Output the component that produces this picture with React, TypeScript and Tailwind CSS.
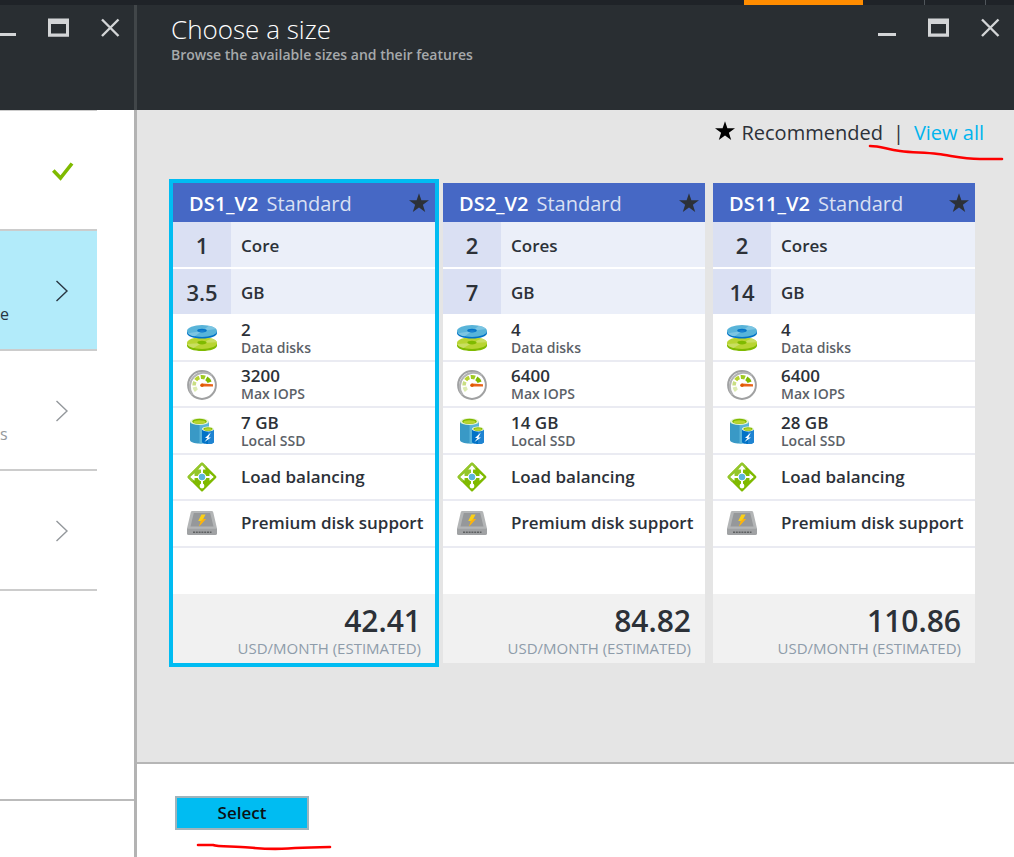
import { useState } from "react";
import type { ReactNode } from "react";

type Size = {
  name: string;
  cores: string;
  coreLabel: string;
  memory: string;
  disks: string;
  iops: string;
  ssd: string;
  price: string;
};

const sizes: Size[] = [
  { name: "DS1_V2", cores: "1", coreLabel: "Core", memory: "3.5", disks: "2", iops: "3200", ssd: "7 GB", price: "42.41" },
  { name: "DS2_V2", cores: "2", coreLabel: "Cores", memory: "7", disks: "4", iops: "6400", ssd: "14 GB", price: "84.82" },
  { name: "DS11_V2", cores: "2", coreLabel: "Cores", memory: "14", disks: "4", iops: "6400", ssd: "28 GB", price: "110.86" },
];

function Star() {
  return (
    <svg width="20" height="20" viewBox="0 0 20 20" fill="currentColor" aria-hidden="true">
      <path d="M10 0.2 12.4 7.3H20L13.9 11.8 16.2 19 10 14.6 3.8 19 6.1 11.8 0 7.3H7.6Z" />
    </svg>
  );
}

function WindowButtons() {
  return (
    <div className="flex gap-8 text-[#d3d5d7]">
      <button type="button" aria-label="Minimize" className="flex size-5 items-center justify-center">
        <svg width="22" height="20" viewBox="0 0 22 20" className="shrink-0">
          <path d="M3 16.5H21" stroke="currentColor" strokeWidth="3" />
        </svg>
      </button>
      <button type="button" aria-label="Maximize" className="flex size-5 items-center justify-center">
        <svg width="24" height="20" viewBox="0 0 24 20" className="shrink-0" fill="currentColor">
          <path fillRule="evenodd" d="M2 0.5H23V18.8H2ZM5 6V15.5H20V6Z" />
        </svg>
      </button>
      <button type="button" aria-label="Close" className="flex size-5 items-center justify-center">
        <svg width="20" height="20" viewBox="0 0 20 20" className="shrink-0">
          <path d="M2 1.5 18.5 18M18.5 1.5 2 18" stroke="currentColor" strokeWidth="2.4" />
        </svg>
      </button>
    </div>
  );
}

function Chevron() {
  return (
    <svg width="14" height="22" viewBox="0 0 14 22" fill="none" stroke="currentColor" strokeWidth="1.4" className="ml-[3px]" aria-hidden="true">
      <path d="M1.5 1 12 11 1.5 21" />
    </svg>
  );
}

function DisksIcon() {
  return (
    <svg width="30" height="28" viewBox="0 0 30 28" aria-hidden="true">
      <path d="M0 19.5V21.5C0 24.8 6.7 27 15 27S30 24.8 30 21.5V19.5Z" fill="#7fba00" />
      <ellipse cx="15" cy="19" rx="15" ry="6" fill="#b8d432" />
      <path d="M15 19 24.5 14.4C27.5 15.2 29.6 16.6 30 18.2Z" fill="#c9de62" />
      <path d="M15 19 0.2 20C0.7 21.8 3.4 23.4 6.5 24Z" fill="#c9de62" />
      <ellipse cx="15" cy="18.6" rx="4.6" ry="1.8" fill="#7fba00" />
      <path d="M0 7V9C0 12.3 6.7 14.5 15 14.5S30 12.3 30 9V7Z" fill="#0072c6" />
      <ellipse cx="15" cy="7" rx="15" ry="6" fill="#59b4d9" />
      <path d="M15 7 22 1.8C25 2.5 28 3.6 29.2 5Z" fill="#7cc5e2" />
      <path d="M15 7 1 9.2C2.2 10.9 4.5 12 7.8 12.3Z" fill="#7cc5e2" />
      <ellipse cx="15" cy="6.6" rx="4.8" ry="1.8" fill="#0072c6" />
      <ellipse cx="15" cy="7.1" rx="3.4" ry="0.8" fill="#1f84d2" />
    </svg>
  );
}

function GaugeIcon() {
  return (
    <svg width="30" height="30" viewBox="0 0 30 30" fill="none" aria-hidden="true">
      <circle cx="15" cy="15" r="13.9" fill="#fff" stroke="#a0a1a2" strokeWidth="2" />
      <path d="M5.5 24.8A13.9 13.9 0 0 1 24.8 5.3" stroke="#b3b4b5" strokeWidth="2" />
      <path d="M9.4 20.6A8 8 0 0 1 7.6 17" stroke="#dcebb0" strokeWidth="4" />
      <path d="M7.1 15.5A8 8 0 0 1 7.9 11.7" stroke="#c9de82" strokeWidth="3.6" />
      <path d="M8.7 10.2A8 8 0 0 1 12.3 7.5" stroke="#b8d432" strokeWidth="3.8" />
      <path d="M13.8 7A8 8 0 0 1 18 7.6" stroke="#a0ca20" strokeWidth="4" />
      <path d="M19.3 8.4A8 8 0 0 1 22.6 12.3" stroke="#7fba00" strokeWidth="4.2" />
      <path d="M26 14.2V16.4H15A1.5 1.7 0 0 1 15 13.5Z" fill="#e8641b" />
      <circle cx="15" cy="15.2" r="1.8" fill="#dd5900" />
    </svg>
  );
}

function StorageIcon() {
  return (
    <svg width="30" height="28" viewBox="0 0 30 28" aria-hidden="true">
      <path d="M3 4.5V23C3 25 7.3 26.5 12.5 26.5S22 25 22 23V4.5Z" fill="#3999c6" />
      <path d="M12.5 4.5V26.5C17.7 26.5 22 25 22 23V4.5Z" fill="#59b4d9" />
      <ellipse cx="12.5" cy="4.5" rx="9.5" ry="3.6" fill="#e6f2d0" />
      <ellipse cx="12.5" cy="4.4" rx="7.2" ry="2.6" fill="#7fba00" />
      <ellipse cx="12.5" cy="5" rx="6" ry="1.8" fill="#b8d432" />
      <path d="M15 12.5V24.8C15 26.2 17.7 27 21 27S27 26.2 27 24.8V12.5Z" fill="#0072c6" />
      <path d="M21 12.5V27C24.3 27 27 26.2 27 24.8V12.5Z" fill="#1f84d2" />
      <ellipse cx="21" cy="12" rx="6" ry="2.5" fill="#f1f8e4" />
      <ellipse cx="21" cy="12" rx="4.6" ry="1.8" fill="#7fba00" />
      <ellipse cx="21" cy="12.4" rx="3.7" ry="1.2" fill="#b8d432" />
      <path d="M23.8 15.5 18 21H20.5L17.5 25 24 20.4H21.4Z" fill="#fff" />
    </svg>
  );
}

function BalancerIcon() {
  return (
    <svg width="30" height="30" viewBox="0 0 30 30" aria-hidden="true">
      <path d="M1 14 14 1Q15 0 16 1L29 14Q30 15 29 16L16 29Q15 30 14 29L1 16Q0 15 1 14Z" fill="#7fba00" />
      <path d="M1 14 14 1Q15 0 16 1L20 5 5 20 1 16Q0 15 1 14Z" fill="#93c62b" />
      <path d="M15 4V25M4 15H26" stroke="#fff" strokeWidth="2" />
      <path d="M11.2 7.500 15 3.200 18.800 7.500ZM7.500 11.200 3.200 15 7.500 18.800ZM22.500 11.200 26.800 15 22.500 18.800Z" fill="#fff" />
      <circle cx="15" cy="24" r="2.400" fill="#fff" />
      <circle cx="15" cy="15" r="4.300" fill="#fff" />
      <circle cx="15" cy="15" r="3.200" fill="#59b4d9" />
    </svg>
  );
}

function PremiumDiskIcon() {
  return (
    <svg width="30" height="26" viewBox="0 0 30 26" aria-hidden="true">
      <path d="M5.5 1H24.5Q26 1 26.3 2.4L30 18.5H0L3.7 2.4Q4 1 5.5 1Z" fill="#b3b5b6" />
      <path d="M6.8 3H23.2L26.5 16.6H3.5Z" fill="#96989a" />
      <path d="M0 18H30V23.4Q30 25 28.4 25H1.6Q0 25 0 23.4Z" fill="#a0a2a4" />
      <path d="M0 18H30V19H0Z" fill="#aeb0b2" />
      <path d="M6 22.300H24.500" stroke="#5f6163" strokeWidth="1.600" strokeDasharray="2 0.800" />
      <path d="M14.5 4.5H18.6L16.2 9H19L12 16.5 13.8 11H11.2Z" fill="#fcd116" />
      <path d="M16.2 9H19L12 16.5 13.8 11Z" fill="#ff8c00" opacity="0.45" />
    </svg>
  );
}

function Headline({ value, label }: { value: string; label: string }) {
  return (
    <span className="flex h-[45px] bg-[#ebeff9] font-semibold">
      <span className="flex w-[58px] items-center justify-center bg-[#dae0f3] pt-[2px] text-[22px]">{value}</span>
      <span className="flex items-center pt-[2px] pl-[10px] text-[17px]">{label}</span>
    </span>
  );
}

function Feature({ icon, value, label }: { icon: ReactNode; value: string; label?: string }) {
  return (
    <span className={`flex items-center border-b-2 border-[#eaebf2] ${label ? "pt-[2px]" : ""}`}>
      <span className="flex w-[58px] shrink-0 justify-center">{icon}</span>
      <span className="flex flex-col pl-[10px] font-semibold whitespace-nowrap">
        <span className="text-[17px] leading-[18px]">{value}</span>
        {label && <span className="text-[14px] leading-[17px] text-[#5c6167]">{label}</span>}
      </span>
    </span>
  );
}

function SizeCard({ size, selected, onSelect }: { size: Size; selected: boolean; onSelect: () => void }) {
  return (
    <button
      type="button"
      aria-pressed={selected}
      onClick={onSelect}
      className={`flex w-[262px] flex-col bg-white text-left ${selected ? "ring-4 ring-[#00bcf2]" : ""}`}
    >
      <span className="flex h-[39px] items-center gap-2 self-stretch bg-[#4668c5] pr-[6px] pl-4 text-[20px]">
        <span className="pt-[2px] font-semibold text-white">{size.name}</span>
        <span className="flex-1 pt-[2px] text-[#dae0f3]">Standard</span>
        <Star />
      </span>
      <span className="flex flex-col gap-[2px] self-stretch">
        <Headline value={size.cores} label={size.coreLabel} />
        <Headline value={size.memory} label="GB" />
      </span>
      <span className="grid h-[280px] grid-rows-6 self-stretch pt-px">
        <Feature icon={<DisksIcon />} value={size.disks} label="Data disks" />
        <Feature icon={<GaugeIcon />} value={size.iops} label="Max IOPS" />
        <Feature icon={<StorageIcon />} value={size.ssd} label="Local SSD" />
        <Feature icon={<BalancerIcon />} value="Load balancing" />
        <Feature icon={<PremiumDiskIcon />} value="Premium disk support" />
      </span>
      <span className="flex h-[69px] flex-col items-end self-stretch bg-[#f1f1f1] pt-2 pr-[14px]">
        <span className="text-[30px] leading-[38px] font-semibold">{size.price}</span>
        <span className="text-[15px] leading-[16px] text-[#8e9caa]">USD/MONTH (ESTIMATED)</span>
      </span>
    </button>
  );
}

function Step({ children, active = false, text }: { children: ReactNode; active?: boolean; text?: string }) {
  return (
    <li
      className={`flex h-[120px] items-center border-b-2 border-[#cccccc] pt-[2px] ${active ? "bg-[#b2ebfa] text-[#293642]" : "text-[#94989c]"}`}
    >
      <span className="flex-1 pt-[46px] text-[16px]">{text}</span>
      <span className="flex w-[49px] pl-1">{children}</span>
    </li>
  );
}

export default function App() {
  const [selected, setSelected] = useState("DS1_V2");

  return (
    <div className="flex min-h-screen flex-col bg-white font-['Open_Sans','Noto_Sans',sans-serif] text-[#2c3138]">
      <div className="flex h-[5px] justify-end bg-[#1f2328]">
        <div className="w-[119px] bg-[#ff8c00]" />
        <div className="w-[61px]" />
        <div className="w-[61px] border-l border-[#50565b]" />
        <div className="w-[29px] border-l border-[#50565b]" />
      </div>
      <div className="flex flex-1">
        <aside className="flex w-[134px] shrink-0 flex-col overflow-hidden">
          <div className="flex h-[105px] justify-end bg-[#292e32] pt-[13px] pr-[14px]">
            <WindowButtons />
          </div>
          <ol className="mr-[37px] flex-1 border-t border-[#cccccc]">
            <Step>
              <svg width="22" height="19" viewBox="0 0 22 19" fill="none" aria-label="Done">
                <path d="M1.3 8.5 8.5 16 20 1.5" stroke="#7fba00" strokeWidth="3.6" />
              </svg>
            </Step>
            <Step active text="e">
              <Chevron />
            </Step>
            <Step text="s">
              <Chevron />
            </Step>
            <Step>
              <Chevron />
            </Step>
          </ol>
          <div className="h-[58px] border-t-2 border-[#bbbbbb]" />
        </aside>
        <div className="flex w-[3px] shrink-0 flex-col bg-[#b3b3b3]">
          <div className="h-[105px] bg-[#414649]" />
        </div>
        <main className="flex min-w-0 flex-1 flex-col">
          <header className="flex h-[105px] justify-between bg-[#292e32] pr-[14px] pl-[34px]">
            <div className="pt-[7px]">
              <h1 className="text-[26px] leading-[34px] font-light text-white">Choose a size</h1>
              <p className="text-[14px] leading-[18px] font-semibold text-[#a6a9ab]">Browse the available sizes and their features</p>
            </div>
            <div className="pt-[13px]">
              <WindowButtons />
            </div>
          </header>
          <section className="flex-1 bg-[#e5e5e5]">
            <div className="flex items-center justify-end gap-[6px] pt-[9px] pr-[30px] text-[20px] leading-[28px]">
              <span className="pb-1 text-black">
                <Star />
              </span>
              <span>Recommended</span>
              <span className="px-1">|</span>
              <span className="relative">
                <a href="#all" className="text-[#00b4ee]">View all</a>
                <svg width="136" height="18" viewBox="0 0 136 18" fill="none" aria-hidden="true" className="absolute top-6 right-[-20px]">
                  <path d="M2 3C12 3 18 6 32 8S55 9 70 11 95 16 112 16H134" stroke="#fe0000" strokeWidth="2.6" strokeLinecap="round" />
                </svg>
              </span>
            </div>
            <div className="flex flex-wrap gap-2 pt-9 pb-[99px] pl-9">
              {sizes.map((size) => (
                <SizeCard key={size.name} size={size} selected={size.name === selected} onSelect={() => setSelected(size.name)} />
              ))}
            </div>
          </section>
          <footer className="flex h-[95px] border-t-2 border-[#b6b6b6] bg-white pt-8 pl-[38px]">
            <div className="relative">
              <button type="button" className="h-[34px] w-[134px] border-2 border-[#9fb4bc] bg-[#00bcf2] text-[17px] font-semibold text-[#0b1115]">
                Select
              </button>
              <svg width="136" height="10" viewBox="0 0 136 10" fill="none" aria-hidden="true" className="absolute top-[45px] left-[21px]">
                <path d="M2 4H17C22 6 38 5 53 6.5S75 8.500 92 7.500 115 6.500 134 6" stroke="#fe0000" strokeWidth="2.600" strokeLinecap="round" />
              </svg>
            </div>
          </footer>
        </main>
      </div>
    </div>
  );
}
